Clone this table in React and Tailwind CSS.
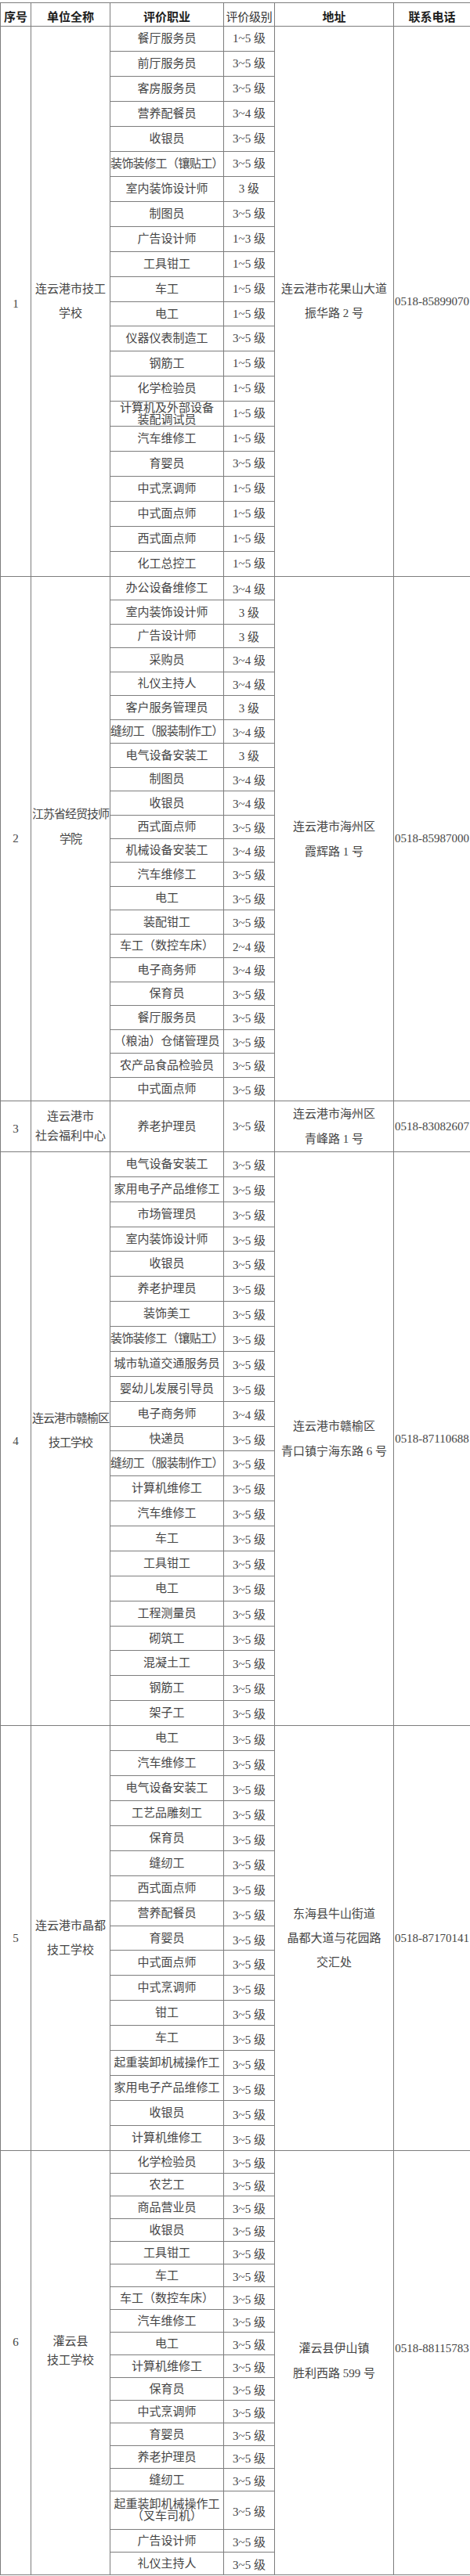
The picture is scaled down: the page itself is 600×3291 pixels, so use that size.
import React from "react";

// row heights -> full class names (so tailwind can see them)
const HEIGHT = {
  28: "h-[28px]",
  29: "h-[29px]",
  30: "h-[30px]",
  31: "h-[31px]",
  32: "h-[32px]",
  33: "h-[33px]",
  49: "h-[49px]",
  65: "h-[65px]",
};

const sections = [
  {
    no: "1",
    unit: ["连云港市技工", "学校"],
    address: ["连云港市花果山大道", "振华路 2 号"],
    phone: "0518-85899070",
    total: 703,
    noCls: "pt-[6px]",
    unitCls: "leading-[31px]",
    addrCls: "leading-[31px]",
    phoneCls: "",
    levelCls: "",
    rows: [
      ["餐厅服务员", "1~5 级"],
      ["前厅服务员", "3~5 级"],
      ["客房服务员", "3~5 级"],
      ["营养配餐员", "3~4 级"],
      ["收银员", "3~5 级"],
      ["装饰装修工（镶贴工）", "3~5 级"],
      ["室内装饰设计师", "3 级"],
      ["制图员", "3~5 级"],
      ["广告设计师", "1~3 级"],
      ["工具钳工", "1~5 级"],
      ["车工", "1~5 级"],
      ["电工", "1~5 级"],
      ["仪器仪表制造工", "3~5 级"],
      ["钢筋工", "1~5 级"],
      ["化学检验员", "1~5 级"],
      ["计算机及外部设备\n装配调试员", "1~5 级"],
      ["汽车维修工", "1~5 级"],
      ["育婴员", "3~5 级"],
      ["中式烹调师", "1~5 级"],
      ["中式面点师", "1~5 级"],
      ["西式面点师", "1~5 级"],
      ["化工总控工", "1~5 级"],
    ],
  },
  {
    no: "2",
    unit: ["江苏省经贸技师", "学院"],
    address: ["连云港市海州区", "霞辉路 1 号"],
    phone: "0518-85987000",
    total: 670,
    noCls: "",
    unitCls: "leading-[32px] pb-[31px] tracking-[-1px]",
    addrCls: "leading-[32px]",
    phoneCls: "",
    levelCls: "pt-[3px]",
    rows: [
      ["办公设备维修工", "3~4 级"],
      ["室内装饰设计师", "3 级"],
      ["广告设计师", "3 级"],
      ["采购员", "3~4 级"],
      ["礼仪主持人", "3~4 级"],
      ["客户服务管理员", "3 级"],
      ["缝纫工（服装制作工）", "3~4 级"],
      ["电气设备安装工", "3 级"],
      ["制图员", "3~4 级"],
      ["收银员", "3~4 级"],
      ["西式面点师", "3~5 级"],
      ["机械设备安装工", "3~4 级"],
      ["汽车维修工", "3~5 级"],
      ["电工", "3~5 级"],
      ["装配钳工", "3~5 级"],
      ["车工（数控车床）", "2~4 级"],
      ["电子商务师", "3~4 级"],
      ["保育员", "3~5 级"],
      ["餐厅服务员", "3~5 级"],
      ["（粮油）仓储管理员", "3~5 级"],
      ["农产品食品检验员", "3~5 级"],
      ["中式面点师", "3~5 级"],
    ],
  },
  {
    no: "3",
    unit: ["连云港市", "社会福利中心"],
    address: ["连云港市海州区", "青峰路 1 号"],
    phone: "0518-83082607",
    total: 65,
    noCls: "pt-[6px]",
    unitCls: "leading-[25px]",
    addrCls: "leading-[32px]",
    phoneCls: "",
    levelCls: "",
    rows: [["养老护理员", "3~5 级"]],
  },
  {
    no: "4",
    unit: ["连云港市赣榆区", "技工学校"],
    address: ["连云港市赣榆区", "青口镇宁海东路 6 号"],
    phone: "0518-87110688",
    total: 733,
    noCls: "pt-[6px]",
    unitCls: "leading-[31px] pb-[21px] tracking-[-1px]",
    addrCls: "leading-[32px]",
    phoneCls: "",
    levelCls: "pt-[4px]",
    rows: [
      ["电气设备安装工", "3~5 级"],
      ["家用电子产品维修工", "3~5 级"],
      ["市场管理员", "3~5 级"],
      ["室内装饰设计师", "3~5 级"],
      ["收银员", "3~5 级"],
      ["养老护理员", "3~5 级"],
      ["装饰美工", "3~5 级"],
      ["装饰装修工（镶贴工）", "3~5 级"],
      ["城市轨道交通服务员", "3~5 级"],
      ["婴幼儿发展引导员", "3~5 级"],
      ["电子商务师", "3~4 级"],
      ["快递员", "3~5 级"],
      ["缝纫工（服装制作工）", "3~5 级"],
      ["计算机维修工", "3~5 级"],
      ["汽车维修工", "3~5 级"],
      ["车工", "3~5 级"],
      ["工具钳工", "3~5 级"],
      ["电工", "3~5 级"],
      ["工程测量员", "3~5 级"],
      ["砌筑工", "3~5 级"],
      ["混凝土工", "3~5 级"],
      ["钢筋工", "3~5 级"],
      ["架子工", "3~5 级"],
    ],
  },
  {
    no: "5",
    unit: ["连云港市晶都", "技工学校"],
    address: ["东海县牛山街道", "晶都大道与花园路", "交汇处"],
    phone: "0518-87170141",
    total: 543,
    noCls: "",
    unitCls: "leading-[31px]",
    addrCls: "leading-[31px]",
    phoneCls: "",
    levelCls: "pt-[6px]",
    rows: [
      ["电工", "3~5 级"],
      ["汽车维修工", "3~5 级"],
      ["电气设备安装工", "3~5 级"],
      ["工艺品雕刻工", "3~5 级"],
      ["保育员", "3~5 级"],
      ["缝纫工", "3~5 级"],
      ["西式面点师", "3~5 级"],
      ["营养配餐员", "3~5 级"],
      ["育婴员", "3~5 级"],
      ["中式面点师", "3~5 级"],
      ["中式烹调师", "3~5 级"],
      ["钳工", "3~5 级"],
      ["车工", "3~5 级"],
      ["起重装卸机械操作工", "3~5 级"],
      ["家用电子产品维修工", "3~5 级"],
      ["收银员", "3~5 级"],
      ["计算机维修工", "3~5 级"],
    ],
  },
  {
    no: "6",
    unit: ["灌云县", "技工学校"],
    address: ["灌云县伊山镇", "胜利西路 599 号"],
    phone: "0518-88115783",
    total: 493,
    noCls: "pb-[53px]",
    unitCls: "leading-[24px] pb-[31px]",
    addrCls: "leading-[32px] pb-[5px]",
    phoneCls: "pb-[37px]",
    levelCls: "pt-[5px]",
    rows: [
      ["化学检验员", "3~5 级"],
      ["农艺工", "3~5 级"],
      ["商品营业员", "3~5 级"],
      ["收银员", "3~5 级"],
      ["工具钳工", "3~5 级"],
      ["车工", "3~5 级"],
      ["车工（数控车床）", "3~5 级"],
      ["汽车维修工", "3~5 级"],
      ["电工", "3~5 级"],
      ["计算机维修工", "3~5 级"],
      ["保育员", "3~5 级"],
      ["中式烹调师", "3~5 级"],
      ["育婴员", "3~5 级"],
      ["养老护理员", "3~5 级"],
      ["缝纫工", "3~5 级"],
      ["起重装卸机械操作工\n（叉车司机）", "3~5 级", 49],
      ["广告设计师", "3~5 级"],
      ["礼仪主持人", "3~5 级"],
    ],
  },
];

const line = "border-[#7d7d7d]";

function Section({ s }) {
  const plain = s.rows.filter((r) => !r[2]);
  let k = 0;
  const heights = s.rows.map((r) => {
    if (r[2]) return r[2];
    const h =
      Math.round(((k + 1) * s.total) / plain.length) -
      Math.round((k * s.total) / plain.length);
    k++;
    return h;
  });

  return (
    <div className="flex">
      {/* 序号 */}
      <div
        className={`w-[39px] shrink-0 border-r border-b ${line} flex items-center justify-center`}
      >
        <span className={`text-[15px] ${s.noCls}`}>{s.no}</span>
      </div>

      {/* 单位全称 */}
      <div
        className={`w-[101px] shrink-0 border-r border-b ${line} flex items-center justify-center`}
      >
        <div className={`text-center whitespace-nowrap ${s.unitCls}`}>
          {s.unit.map((u) => (
            <div key={u}>{u}</div>
          ))}
        </div>
      </div>

      {/* 评价职业 + 评价级别 */}
      <div className="w-[210px] shrink-0 flex flex-col">
        {s.rows.map((r, i) => (
          <div
            key={i}
            className={`flex border-b ${line} ${HEIGHT[heights[i]]}`}
          >
            <div
              className={`w-[145px] border-r ${line} flex items-center justify-center text-center whitespace-pre-line ${
                r[0].includes("\n")
                  ? "leading-[15px]"
                  : r[0].length >= 10
                  ? "tracking-[-0.6px] whitespace-nowrap"
                  : "whitespace-nowrap"
              }`}
            >
              {r[0]}
            </div>
            <div
              className={`w-[65px] border-r ${line} flex items-center justify-center whitespace-nowrap ${s.levelCls}`}
            >
              {r[1]}
            </div>
          </div>
        ))}
      </div>

      {/* 地址 */}
      <div
        className={`w-[152px] shrink-0 border-r border-b ${line} flex items-center justify-center`}
      >
        <div className={`text-center whitespace-nowrap ${s.addrCls}`}>
          {s.address.map((a) => (
            <div key={a}>{a}</div>
          ))}
        </div>
      </div>

      {/* 联系电话 */}
      <div
        className={`flex-1 border-b ${line} flex items-center justify-center`}
      >
        <span className={`whitespace-nowrap ${s.phoneCls}`}>{s.phone}</span>
      </div>
    </div>
  );
}

export default function App() {
  return (
    <div className="bg-white w-[600px] min-h-[3291px] pt-[3px] overflow-hidden">
      <div
        className={`w-[600px] border-t border-l ${line} text-[15px] leading-none font-normal text-[#454545] font-['Liberation_Serif','Noto_Sans_CJK_SC',serif]`}
      >
        {/* header */}
        <div
          className={`flex h-[30px] border-b ${line} text-[#1c1c1c] font-['Noto_Sans_CJK_SC',sans-serif] font-bold`}
        >
          <div className={`w-[39px] shrink-0 border-r ${line} flex items-center justify-center pt-[3px]`}>
            序号
          </div>
          <div className={`w-[101px] shrink-0 border-r ${line} flex items-center justify-center pt-[3px]`}>
            单位全称
          </div>
          <div className={`w-[145px] shrink-0 border-r ${line} flex items-center justify-center pt-[3px]`}>
            评价职业
          </div>
          <div
            className={`w-[65px] shrink-0 border-r ${line} flex items-center justify-center pt-[3px] font-normal text-[#333] tracking-[-0.3px]`}
          >
            评价级别
          </div>
          <div className={`w-[152px] shrink-0 border-r ${line} flex items-center justify-center pt-[3px]`}>
            地址
          </div>
          <div className="flex-1 flex items-center justify-center pt-[3px]">
            联系电话
          </div>
        </div>

        {sections.map((s) => (
          <Section key={s.no} s={s} />
        ))}
      </div>
    </div>
  );
}
